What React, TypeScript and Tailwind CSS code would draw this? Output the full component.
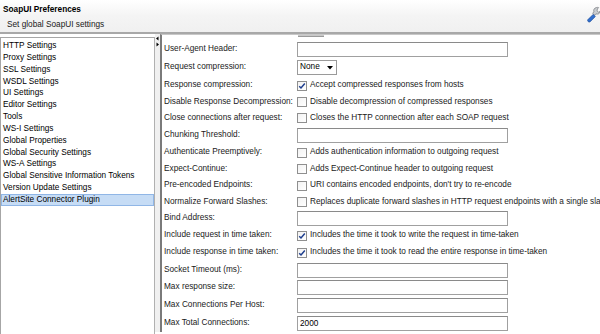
import React from "react";

const listItems = [
  "HTTP Settings",
  "Proxy Settings",
  "SSL Settings",
  "WSDL Settings",
  "UI Settings",
  "Editor Settings",
  "Tools",
  "WS-I Settings",
  "Global Properties",
  "Global Security Settings",
  "WS-A Settings",
  "Global Sensitive Information Tokens",
  "Version Update Settings",
  "AlertSite Connector Plugin",
];

type Row =
  | { kind: "input"; label: string; h: number; value?: string }
  | { kind: "select"; label: string; h: number }
  | { kind: "check"; label: string; h: number; text: string; checked?: boolean };

const rows: Row[] = [
  { kind: "input", label: "User-Agent Header:", h: 18 },
  { kind: "select", label: "Request compression:", h: 19 },
  { kind: "check", label: "Response compression:", h: 17, text: "Accept compressed responses from hosts", checked: true },
  { kind: "check", label: "Disable Response Decompression:", h: 16, text: "Disable decompression of compressed responses" },
  { kind: "check", label: "Close connections after request:", h: 16, text: "Closes the HTTP connection after each SOAP request" },
  { kind: "input", label: "Chunking Threshold:", h: 18 },
  { kind: "check", label: "Authenticate Preemptively:", h: 17, text: "Adds authentication information to outgoing request" },
  { kind: "check", label: "Expect-Continue:", h: 16, text: "Adds Expect-Continue header to outgoing request" },
  { kind: "check", label: "Pre-encoded Endpoints:", h: 17, text: "URI contains encoded endpoints, don't try to re-encode" },
  { kind: "check", label: "Normalize Forward Slashes:", h: 16, text: "Replaces duplicate forward slashes in HTTP request endpoints with a single slash" },
  { kind: "input", label: "Bind Address:", h: 17 },
  { kind: "check", label: "Include request in time taken:", h: 17, text: "Includes the time it took to write the request in time-taken", checked: true },
  { kind: "check", label: "Include response in time taken:", h: 17, text: "Includes the time it took to read the entire response in time-taken", checked: true },
  { kind: "input", label: "Socket Timeout (ms):", h: 18 },
  { kind: "input", label: "Max response size:", h: 17 },
  { kind: "input", label: "Max Connections Per Host:", h: 18 },
  { kind: "input", label: "Max Total Connections:", h: 18, value: "2000" },
];

function CheckBox({ checked }: { checked?: boolean }) {
  return (
    <div className="w-[10px] h-[10px] border border-[#8f8f8f] bg-gradient-to-br from-[#f2f2f2] to-white flex items-center justify-center shrink-0">
      {checked && (
        <svg width="8" height="8" viewBox="0 0 8 8">
          <path d="M1.2 4.2 L3 6 L6.8 1.6" fill="none" stroke="#1f3f8f" strokeWidth="1.5" />
        </svg>
      )}
    </div>
  );
}

function Wrench() {
  return (
    <svg width="18" height="18" viewBox="0 0 18 18" className="absolute left-[585px] top-[6px]">
      <path
        d="M11.5 1.5 a3.6 3.6 0 0 0 -2.6 4.4 L7.6 7.2 L9.6 9.2 L10.9 7.9 a3.6 3.6 0 0 0 4.4 -2.6 L13.6 6.2 L12 4.8 L12.4 3 L13.6 1.6 A3.6 3.6 0 0 0 11.5 1.5 Z"
        fill="#c9ccd0"
        stroke="#7d8186"
        strokeWidth="0.8"
      />
      <path d="M8.2 8.4 L3 13.6 a1.5 1.5 0 0 0 2.1 2.1 L10.3 10.5 Z" fill="#2f6fd0" stroke="#1d4c9c" strokeWidth="0.8" />
    </svg>
  );
}

export default function App() {
  return (
    <div
      className="relative w-[600px] h-[334px] overflow-hidden bg-white text-[8.25px] text-black"
      style={{ fontFamily: '"Liberation Sans", Arial, sans-serif' }}
    >
      {/* Header */}
      <div className="h-[34px] border-b-2 border-[#a8a8a8] bg-gradient-to-b from-white via-[#f4f4f4] to-[#f0f0f0] relative">
        <div className="pt-[5px] pl-[3px] font-bold leading-[10px]">SoapUI Preferences</div>
        <div className="pt-[5px] pl-[7px] leading-[10px] text-[#202020]">Set global SoapUI settings</div>
        <Wrench />
      </div>

      {/* Body */}
      <div className="flex h-[298px]">
        {/* Left list */}
        <div className="w-[155px] pt-[3px] bg-white shrink-0">
          <div className="h-[320px] border border-[#a6a6a6] border-r-[#b0b0b0] pt-[2px]">
            {listItems.map((it, i) => (
              <div
                key={it}
                className={
                  "h-[11.85px] leading-[11.85px] pl-[2px] whitespace-nowrap " +
                  (i === listItems.length - 1 ? "bg-[#c6dcf5] outline outline-1 outline-[#90b6e6] -outline-offset-1" : "")
                }
              >
                {it}
              </div>
            ))}
          </div>
        </div>

        {/* Splitter */}
        <div className="w-[5px] shrink-0 bg-[#f0f0f0] flex flex-col items-center pt-[2px]">
          <svg width="5" height="12" viewBox="0 0 5 12">
            <path d="M3.5 0.5 L1 2.5 L3.5 4.5 Z" fill="#000" />
            <path d="M1.5 6.5 L4 8.5 L1.5 10.5 Z" fill="#000" />
          </svg>
        </div>

        {/* Right panel */}
        <div className="flex-1 min-w-0 border-l-2 border-[#7a7a7a] border-t border-t-[#c8c8c8] overflow-hidden">
          <div className="h-[5px] relative">
            <div className="absolute left-[136px] top-[-2px] w-[26px] h-[4px] bg-[#c8c8c8] border-b border-[#9a9a9a]" />
          </div>
          {rows.map((r) => (
            <div key={r.label} className="flex items-center whitespace-nowrap" style={{ height: r.h }}>
              <div className="w-[135px] pl-[2px] shrink-0 text-[#1a1a1a]">{r.label}</div>
              {r.kind === "input" && (
                <div className="w-[211px] h-[15px] border border-[#a0a0a0] border-t-[#8a8a8a] bg-white pl-[2px] leading-[13px]">
                  {r.value}
                </div>
              )}
              {r.kind === "select" && (
                <div className="w-[40px] h-[15px] border border-[#9a9a9a] bg-white flex items-center pl-[2px] justify-between pr-[3px]">
                  <span>None</span>
                  <svg width="6" height="4" viewBox="0 0 6 4">
                    <path d="M0 0 L6 0 L3 3.5 Z" fill="#000" />
                  </svg>
                </div>
              )}
              {r.kind === "check" && (
                <div className="flex items-center gap-[3px] text-[#1a1a1a]">
                  <CheckBox checked={r.checked} />
                  <span>{r.text}</span>
                </div>
              )}
            </div>
          ))}
        </div>
      </div>
    </div>
  );
}
